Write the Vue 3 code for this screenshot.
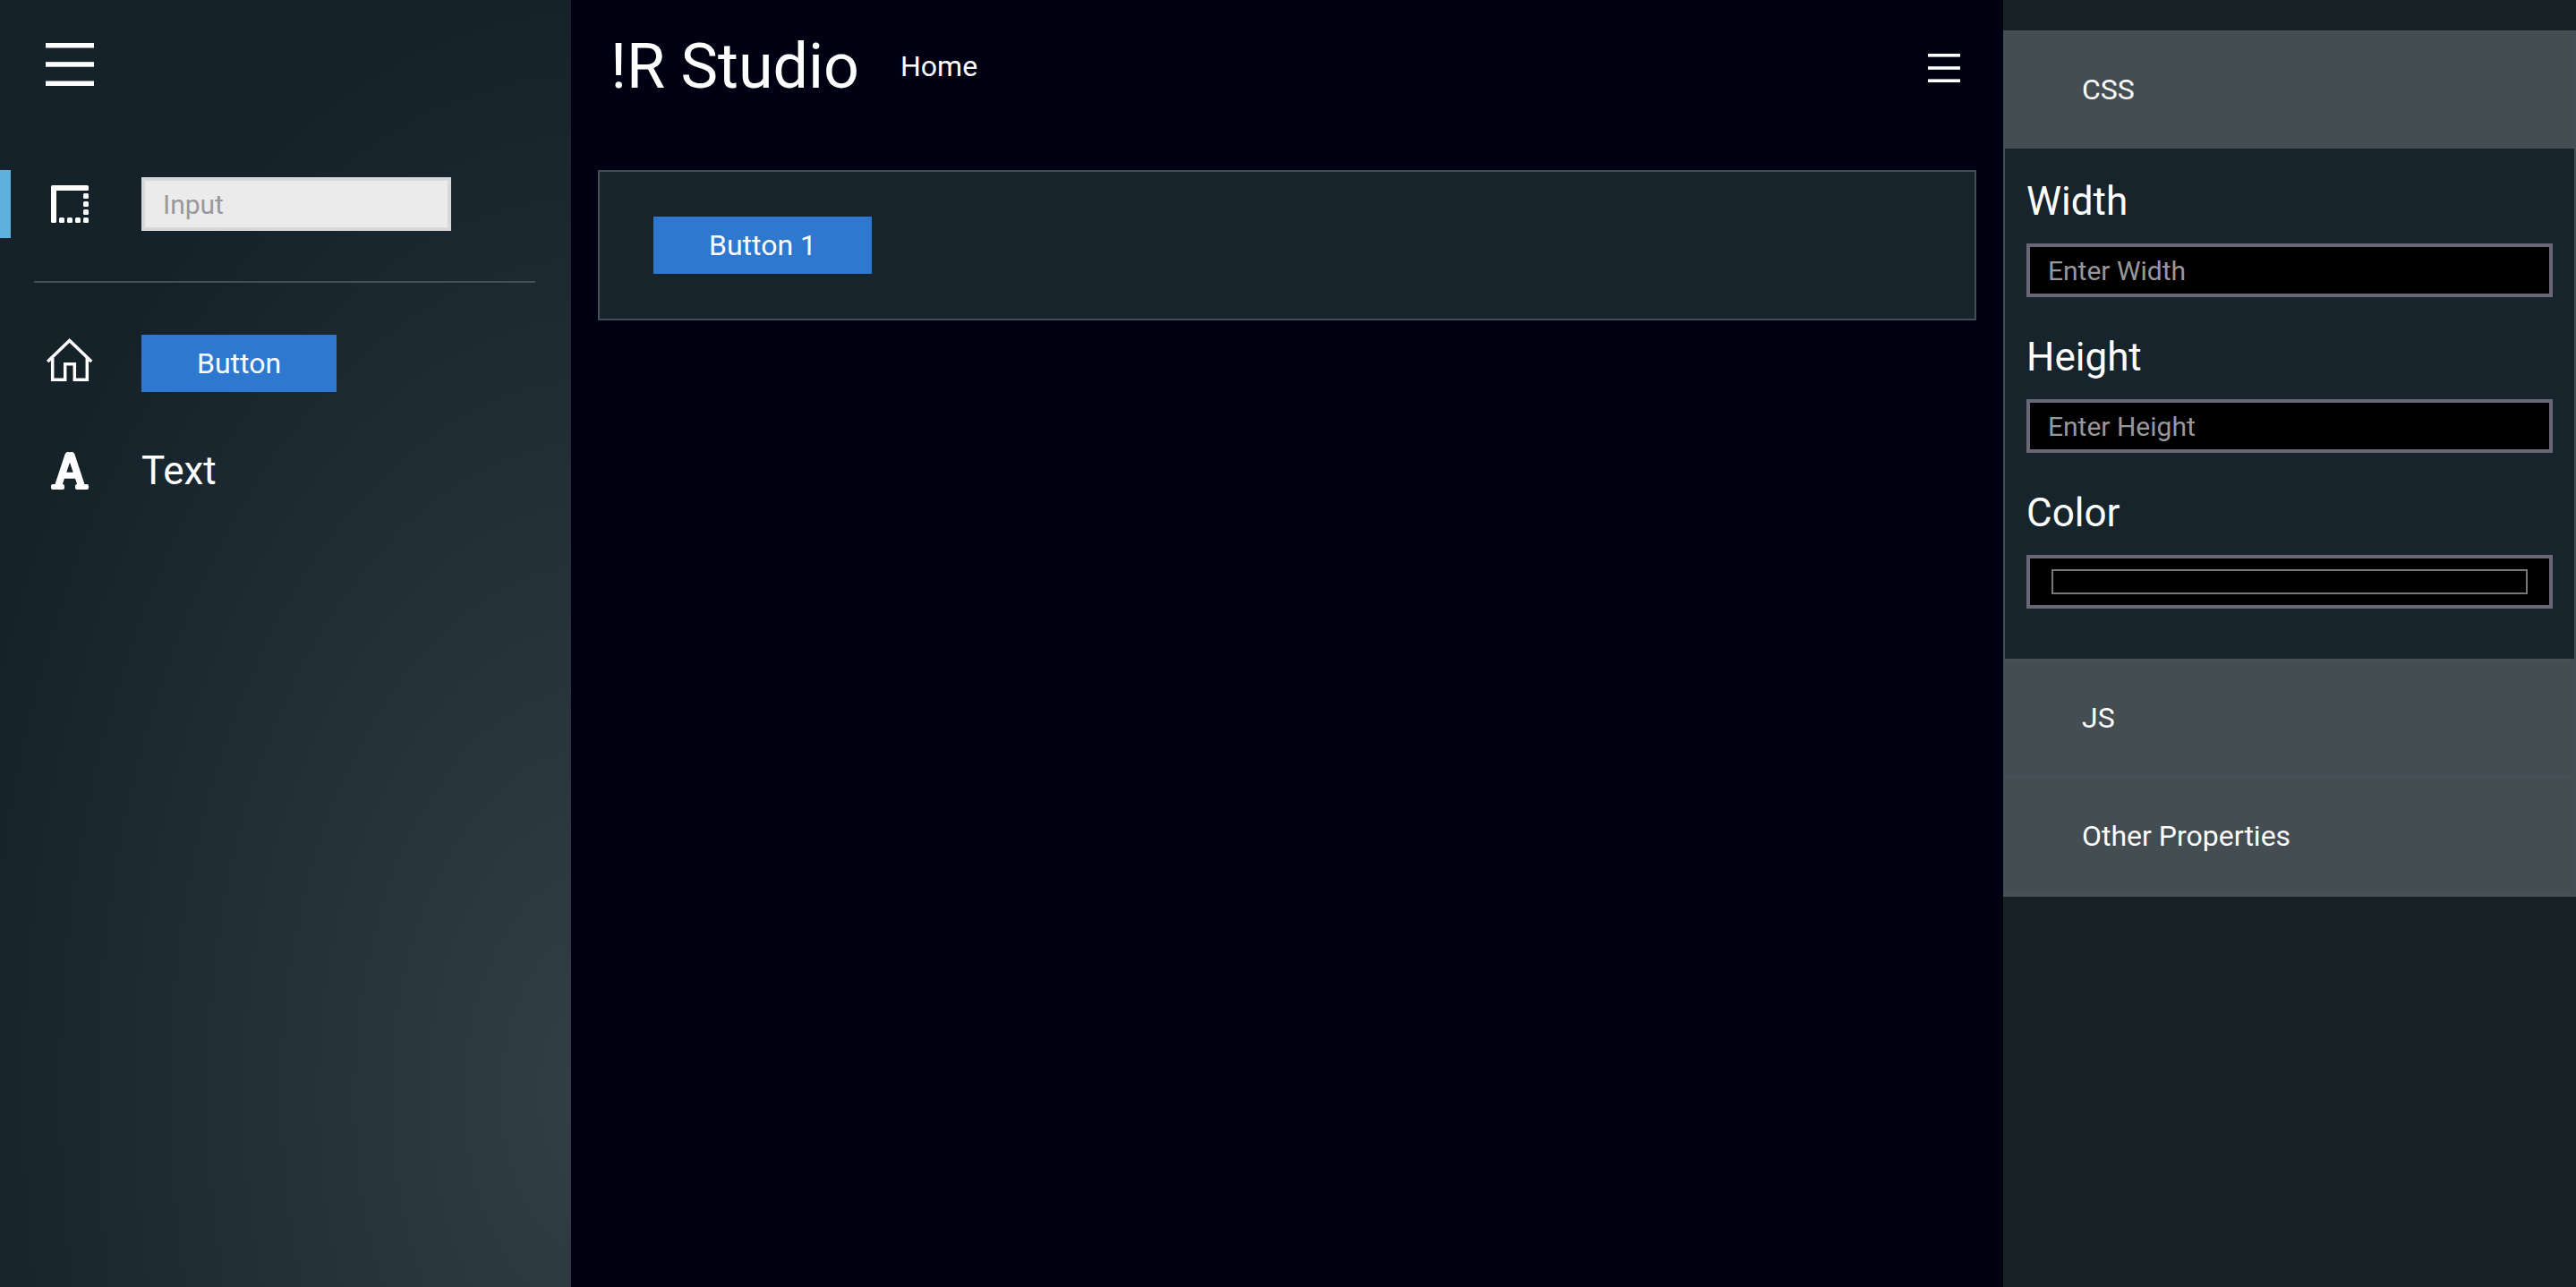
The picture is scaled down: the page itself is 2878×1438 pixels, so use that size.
<script setup>
import { ref } from 'vue'

const inputValue = ref('')
const width = ref('')
const height = ref('')
const color = ref('#000000')
const open = ref('CSS')

const toggle = (name) => {
  open.value = open.value === name ? '' : name
}
</script>

<template>
  <div class="studio">
    <aside class="palette">
      <button class="icon-button menu" type="button" aria-label="Collapse palette">
        <svg width="54" height="48" viewBox="0 0 54 48" fill="currentColor">
          <rect width="54" height="5.5" />
          <rect y="21.2" width="54" height="5.5" />
          <rect y="42.5" width="54" height="5.5" />
        </svg>
      </button>

      <ul class="items">
        <li class="item active">
          <span class="item-icon">
            <svg width="42" height="42" viewBox="0 0 42 42" fill="currentColor">
              <path d="M1.5 0H40.5A1.5 1.5 0 0 1 42 1.5V4.5A1.5 1.5 0 0 1 40.5 6H6V40.5A1.5 1.5 0 0 1 4.5 42H1.5A1.5 1.5 0 0 1 0 40.5V1.5A1.5 1.5 0 0 1 1.5 0Z" />
              <rect v-for="n in 3" :key="'b' + n" :x="n * 9" y="36" width="6" height="6" rx="1.5" />
              <rect v-for="n in 4" :key="'r' + n" x="36" :y="n * 9" width="6" height="6" rx="1.5" />
            </svg>
          </span>
          <input v-model="inputValue" class="field light" type="text" placeholder="Input" aria-label="Input" />
        </li>
      </ul>
      <hr class="divider" />
      <ul class="items">
        <li class="item">
          <span class="item-icon">
            <svg width="52" height="56" viewBox="0 0 52 56" fill="none" stroke="currentColor" stroke-width="3.5">
              <path d="M1.2 26L25.7 2.5L50.2 26" />
              <path d="M6.7 22V46.2H20.7V28.7H31.3V46.2H45.3V22" />
            </svg>
          </span>
          <button class="primary" type="button">Button</button>
        </li>
        <li class="item">
          <span class="item-icon">
            <svg width="42" height="42" viewBox="0 0 42 42" stroke="currentColor" stroke-width="8" stroke-linecap="round">
              <line x1="19.3" y1="4" x2="8.7" y2="36" />
              <line x1="22.7" y1="4" x2="33.3" y2="36" />
              <line x1="13" y1="26.3" x2="29" y2="26.3" stroke-width="7" />
              <rect y="36" width="15" height="6" rx="2" fill="currentColor" stroke="none" />
              <rect x="27" y="36" width="15" height="6" rx="2" fill="currentColor" stroke="none" />
            </svg>
          </span>
          <span class="label">Text</span>
        </li>
      </ul>
    </aside>

    <main class="workspace">
      <header class="topbar">
        <h1 class="brand">!R Studio</h1>
        <a class="link" href="#home">Home</a>
        <button class="icon-button end" type="button" aria-label="Menu">
          <svg width="36" height="36" viewBox="0 0 36 36" fill="currentColor">
            <rect y="4" width="36" height="3.6" />
            <rect y="18.2" width="36" height="3.6" />
            <rect y="32.4" width="36" height="3.6" />
          </svg>
        </button>
      </header>
      <section class="canvas">
        <button class="primary" type="button">Button 1</button>
      </section>
    </main>

    <aside class="inspector">
      <div class="accordion">
        <button class="head" type="button" :aria-expanded="open === 'CSS'" @click="toggle('CSS')">CSS</button>
        <form v-if="open === 'CSS'" class="panel" @submit.prevent>
          <div class="group">
            <label class="label" for="css-width">Width</label>
            <input id="css-width" v-model="width" class="field dark" type="text" placeholder="Enter Width" />
          </div>
          <div class="group">
            <label class="label" for="css-height">Height</label>
            <input id="css-height" v-model="height" class="field dark" type="text" placeholder="Enter Height" />
          </div>
          <div class="group">
            <label class="label" for="css-color">Color</label>
            <input id="css-color" v-model="color" class="field dark swatch" type="color" />
          </div>
        </form>
        <button class="head" type="button" :aria-expanded="open === 'JS'" @click="toggle('JS')">JS</button>
        <button class="head" type="button" :aria-expanded="open === 'Other'" @click="toggle('Other')">Other Properties</button>
      </div>
    </aside>
  </div>
</template>

<style>
body {
  background: #000013;
}
</style>

<style scoped>
.studio {
  display: grid;
  grid-template-columns: 638px minmax(0, 1fr) 640px;
  min-height: 100vh;
  background: #000013;
  color: #fff;
  font-family: Roboto, "Liberation Sans", sans-serif;
  font-size: 32px;
  line-height: 40px;
}

.studio * {
  box-sizing: border-box;
}

button,
input {
  margin: 0;
  font: inherit;
  color: inherit;
}

svg {
  display: block;
}

.icon-button {
  padding: 0;
  border: 0;
  background: none;
  cursor: pointer;
}

/* Palette */
.palette {
  padding-top: 48px;
  background: radial-gradient(ellipse 115% 85% at 105% 85%, #323f46 0%, #15222a 100%);
}

.menu {
  display: block;
  margin: 0 0 94px 51px;
}

.items {
  display: flex;
  flex-direction: column;
  gap: 44px;
  margin: 0;
  padding: 0;
  list-style: none;
}

.item {
  display: flex;
  align-items: center;
  height: 76px;
  border-left: 12px solid transparent;
}

.item.active {
  border-left-color: #5fb1df;
}

.item-icon {
  display: flex;
  justify-content: center;
  width: 132px;
  margin-right: 14px;
}

.divider {
  height: 2px;
  margin: 48px 40px 52px 38px;
  border: 0;
  background: #454e56;
}

.label {
  font-size: 44px;
  line-height: 54px;
}

.primary {
  height: 64px;
  padding: 0 62px;
  border: 0;
  background: #2e78d0;
  cursor: pointer;
}

.field {
  display: block;
  height: 60px;
  padding: 0 20px;
  border: 4px solid;
  border-radius: 0;
  outline: none;
  font-size: 30px;
}

.field.light {
  width: 346px;
  border-color: #d8d8d8;
  background: #ebebeb;
  color: #222;
}

.field.dark {
  width: 100%;
  border-color: #696775;
  background: #000;
}

.field::placeholder {
  color: #98989c;
  opacity: 1;
}

.field.swatch {
  appearance: none;
  padding: 12px 24px;
}

.swatch::-webkit-color-swatch-wrapper {
  padding: 0;
}

.swatch::-webkit-color-swatch {
  border: 2px solid #777;
  border-radius: 0;
}

/* Workspace */
.workspace {
  padding: 0 30px;
}

.topbar {
  display: flex;
  align-items: center;
  height: 148px;
  margin-bottom: 42px;
  padding: 0 18px 0 14px;
}

.brand {
  margin: 0 46px 0 0;
  font-size: 70px;
  font-weight: 400;
  line-height: 84px;
}

.link {
  color: inherit;
  text-decoration: none;
}

.end {
  margin-left: auto;
}

.canvas {
  padding: 50px 60px;
  border: 2px solid #434f55;
  background: #17242c;
}

.canvas .primary {
  display: block;
}

/* Inspector */
.inspector {
  padding-top: 34px;
  background: #172227;
}

.accordion {
  border-bottom: 2px solid #445056;
}

.head {
  display: block;
  width: 100%;
  height: 132px;
  padding: 0 86px;
  border: 2px solid #445056;
  border-radius: 0;
  background: #434d52;
  text-align: left;
  cursor: pointer;
}

.panel {
  display: flex;
  flex-direction: column;
  gap: 40px;
  padding: 32px 24px 56px;
  border: solid #445056;
  border-width: 0 2px;
  background: #17242c;
}

.group {
  display: flex;
  flex-direction: column;
  gap: 20px;
}
</style>
